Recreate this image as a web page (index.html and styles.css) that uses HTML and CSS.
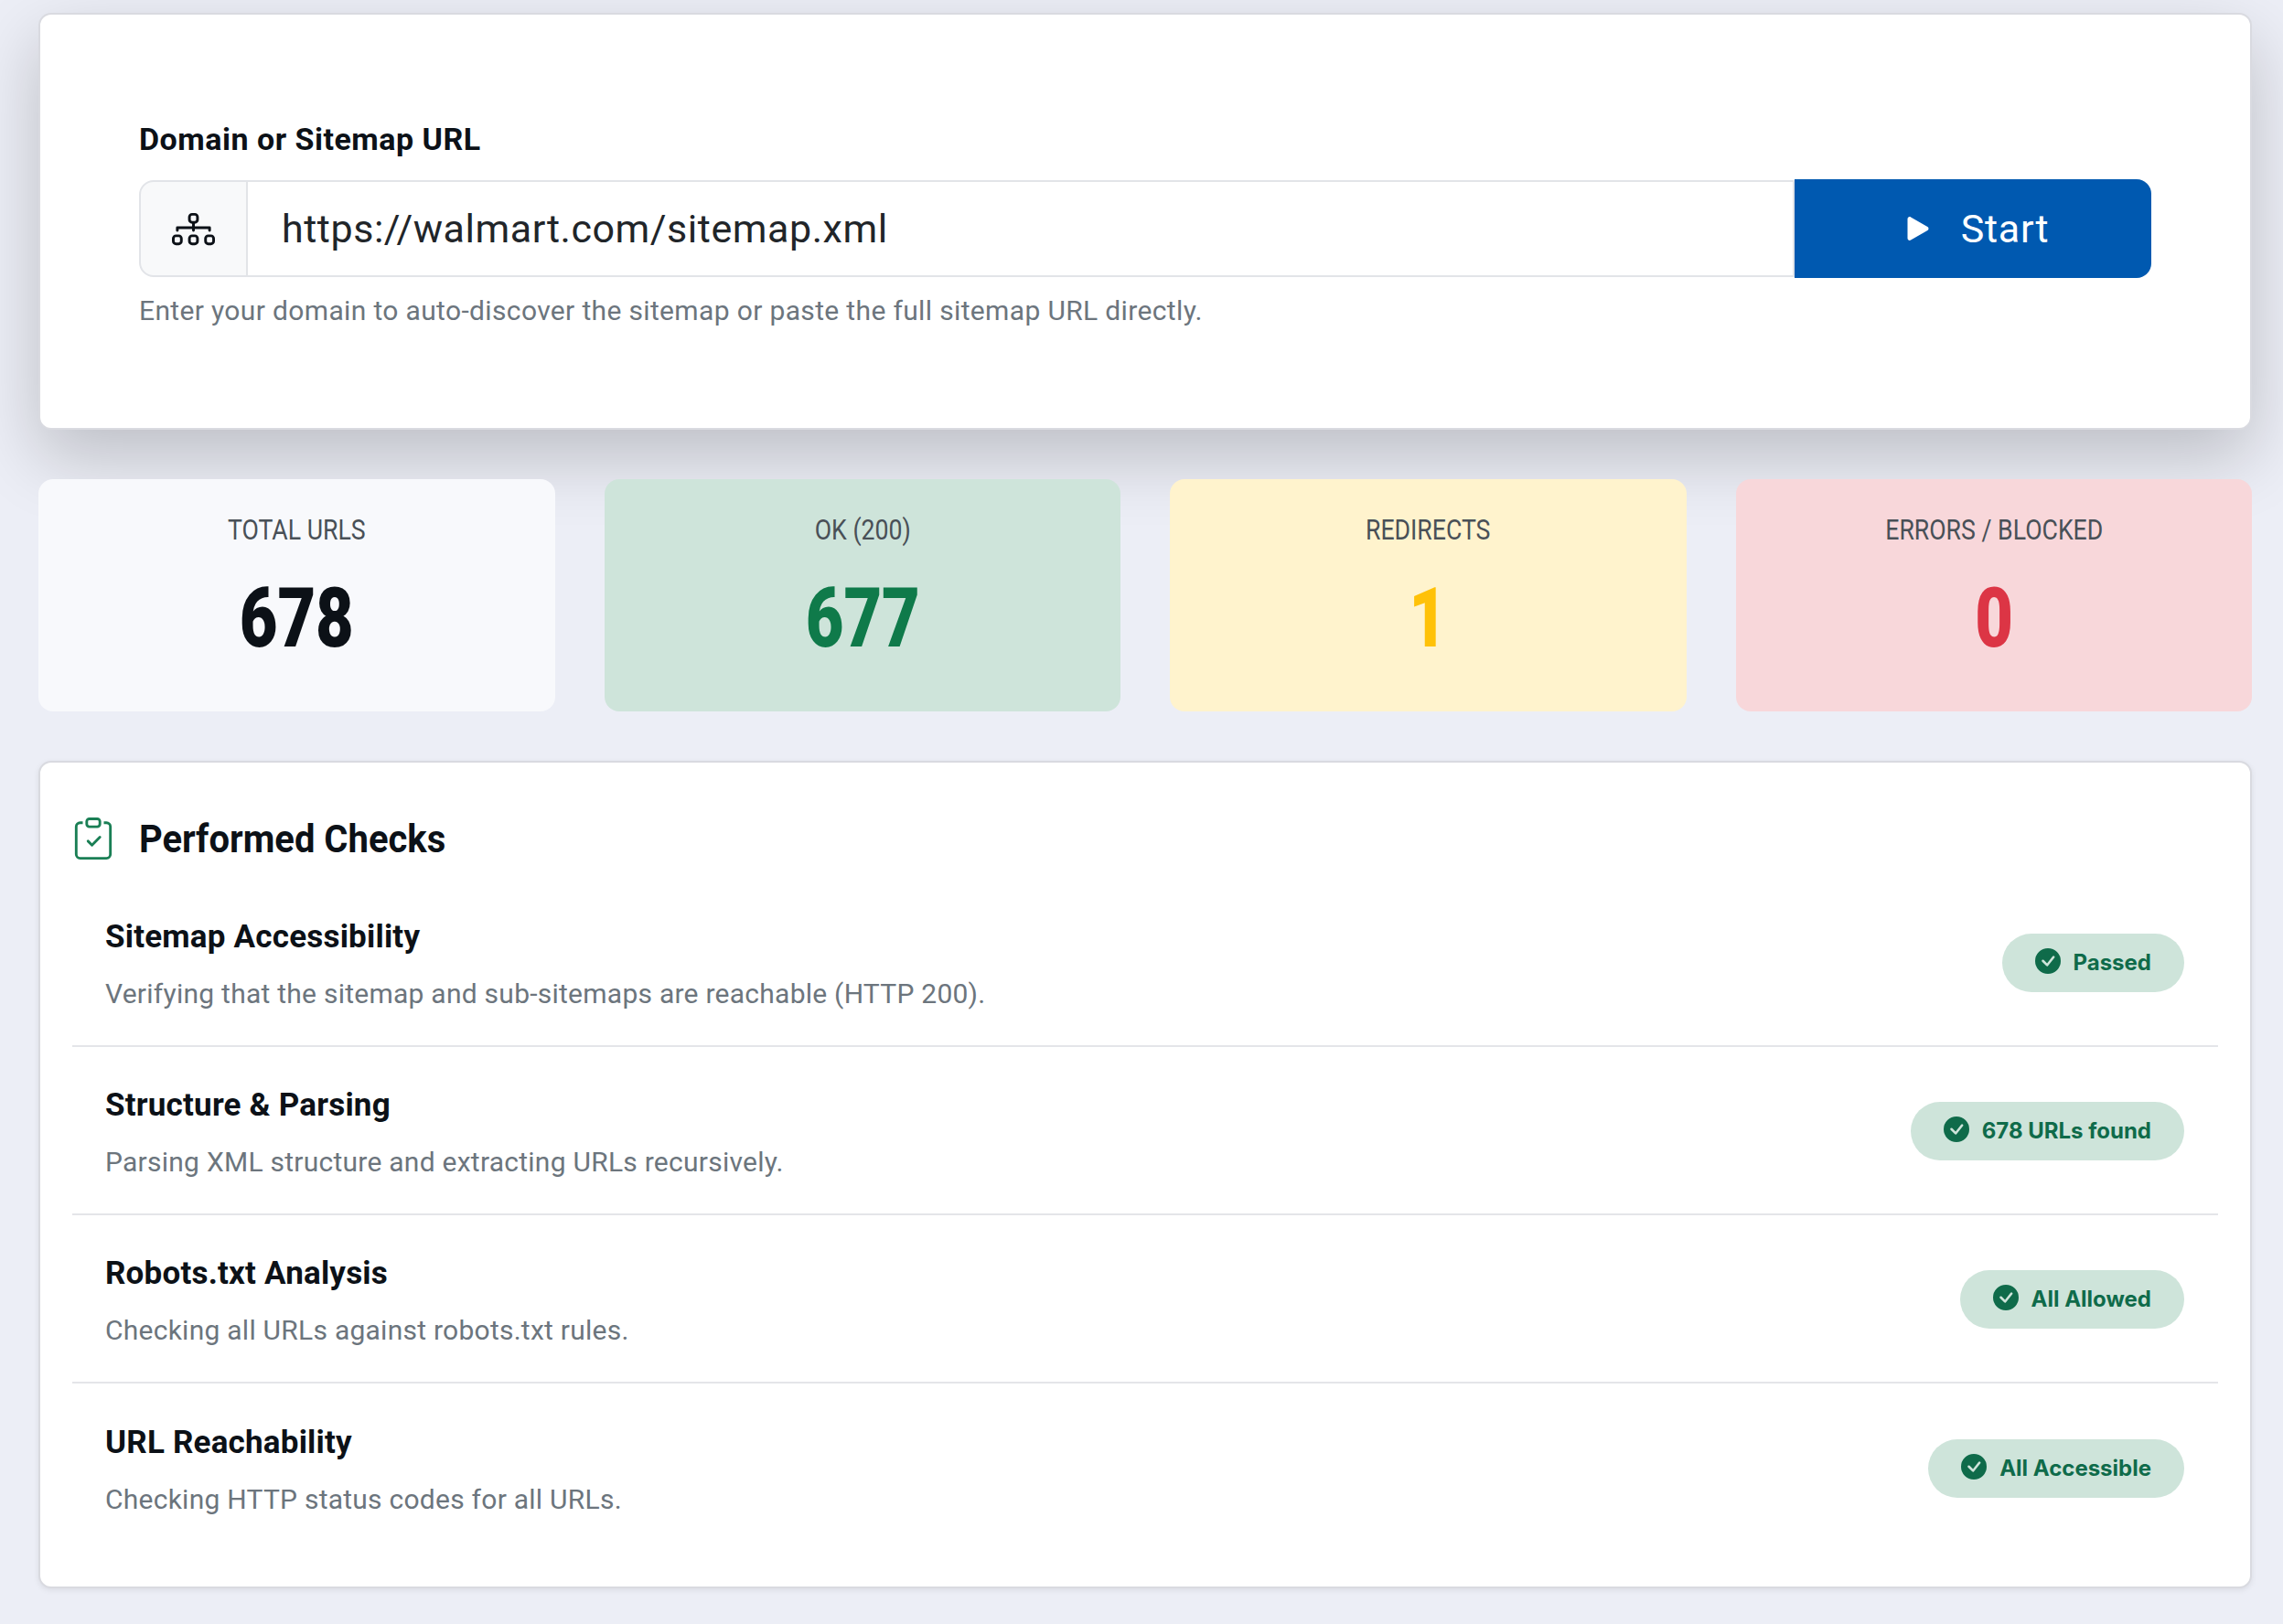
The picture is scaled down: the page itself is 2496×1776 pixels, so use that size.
FILE: index.html
```html
<!DOCTYPE html>
<html lang="en">
<head>
  <meta charset="UTF-8">
  <meta name="viewport" content="width=device-width, initial-scale=1">
  <title>Sitemap Checker</title>
  <link rel="stylesheet" href="styles.css">
</head>
<body>
  <div class="page">
    <section class="card hero">
      <label class="field-label" for="url">Domain or Sitemap URL</label>
      <div class="input-group">
        <span class="addon">
          <svg class="addon-icon" viewBox="0 0 16 16" fill="currentColor"><path fill-rule="evenodd" d="M6 3.5A1.5 1.5 0 0 1 7.5 2h1A1.5 1.5 0 0 1 10 3.5v1A1.5 1.5 0 0 1 8.5 6v1H14a.5.5 0 0 1 .5.5v1a.5.5 0 0 1-1 0V8h-5v.5a.5.5 0 0 1-1 0V8h-5v.5a.5.5 0 0 1-1 0v-1A.5.5 0 0 1 2 7h5.5V6A1.5 1.5 0 0 1 6 4.5zM8.5 5a.5.5 0 0 0 .5-.5v-1a.5.5 0 0 0-.5-.5h-1a.5.5 0 0 0-.5.5v1a.5.5 0 0 0 .5.5zM0 11.5A1.5 1.5 0 0 1 1.5 10h1A1.5 1.5 0 0 1 4 11.5v1A1.5 1.5 0 0 1 2.5 14h-1A1.5 1.5 0 0 1 0 12.5zm1.5-.5a.5.5 0 0 0-.5.5v1a.5.5 0 0 0 .5.5h1a.5.5 0 0 0 .5-.5v-1a.5.5 0 0 0-.5-.5zm4.5.5A1.5 1.5 0 0 1 7.5 10h1a1.5 1.5 0 0 1 1.5 1.5v1A1.5 1.5 0 0 1 8.5 14h-1A1.5 1.5 0 0 1 6 12.5zm1.5-.5a.5.5 0 0 0-.5.5v1a.5.5 0 0 0 .5.5h1a.5.5 0 0 0 .5-.5v-1a.5.5 0 0 0-.5-.5zm4.5.5a1.5 1.5 0 0 1 1.5-1.5h1a1.5 1.5 0 0 1 1.5 1.5v1a1.5 1.5 0 0 1-1.5 1.5h-1a1.5 1.5 0 0 1-1.5-1.5zm1.5-.5a.5.5 0 0 0-.5.5v1a.5.5 0 0 0 .5.5h1a.5.5 0 0 0 .5-.5v-1a.5.5 0 0 0-.5-.5z"/></svg>
        </span>
        <input class="url-input" type="text" id="url" value="https://walmart.com/sitemap.xml">
        <button class="start" type="button">
          <svg class="play-icon" viewBox="0 0 16 16" fill="currentColor"><path d="m11.596 8.697-6.363 3.692c-.54.313-1.233-.066-1.233-.697V4.308c0-.63.692-1.01 1.233-.696l6.363 3.692a.802.802 0 0 1 0 1.393"/></svg>
          <span>Start</span>
        </button>
      </div>
      <p class="help">Enter your domain to auto-discover the sitemap or paste the full sitemap URL directly.</p>
    </section>

    <section class="stats">
      <div class="stat stat-total">
        <div class="stat-label">TOTAL URLS</div>
        <div class="stat-value">678</div>
      </div>
      <div class="stat stat-ok">
        <div class="stat-label">OK (200)</div>
        <div class="stat-value">677</div>
      </div>
      <div class="stat stat-redirect">
        <div class="stat-label">REDIRECTS</div>
        <div class="stat-value">1</div>
      </div>
      <div class="stat stat-error">
        <div class="stat-label">ERRORS / BLOCKED</div>
        <div class="stat-value">0</div>
      </div>
    </section>

    <section class="card checks">
      <h2 class="checks-title">
        <svg class="clip-icon" viewBox="0 0 16 16" fill="currentColor"><path fill-rule="evenodd" d="M10.854 7.146a.5.5 0 0 1 0 .708l-3 3a.5.5 0 0 1-.708 0l-1.5-1.5a.5.5 0 1 1 .708-.708L7.5 9.793l2.646-2.647a.5.5 0 0 1 .708 0"/><path d="M4 1.5H3a2 2 0 0 0-2 2V14a2 2 0 0 0 2 2h10a2 2 0 0 0 2-2V3.5a2 2 0 0 0-2-2h-1v1h1a1 1 0 0 1 1 1V14a1 1 0 0 1-1 1H3a1 1 0 0 1-1-1V3.5a1 1 0 0 1 1-1h1z"/><path d="M9.5 1a.5.5 0 0 1 .5.5v1a.5.5 0 0 1-.5.5h-3a.5.5 0 0 1-.5-.5v-1a.5.5 0 0 1 .5-.5zm-3-1A1.5 1.5 0 0 0 5 1.5v1A1.5 1.5 0 0 0 6.5 4h3A1.5 1.5 0 0 0 11 2.5v-1A1.5 1.5 0 0 0 9.5 0z"/></svg>
        <span class="checks-text">Performed Checks</span>
      </h2>

      <div class="check-row">
        <div>
          <div class="check-name">Sitemap Accessibility</div>
          <div class="check-desc">Verifying that the sitemap and sub-sitemaps are reachable (HTTP 200).</div>
        </div>
        <span class="badge"><svg class="badge-icon" viewBox="0 0 16 16" fill="currentColor"><path d="M16 8A8 8 0 1 1 0 8a8 8 0 0 1 16 0m-3.97-3.03a.75.75 0 0 0-1.08.022L7.477 9.417 5.384 7.323a.75.75 0 0 0-1.06 1.06L6.97 11.03a.75.75 0 0 0 1.079-.02l3.992-4.99a.75.75 0 0 0-.01-1.05z"/></svg>Passed</span>
      </div>

      <div class="check-row">
        <div>
          <div class="check-name">Structure &amp; Parsing</div>
          <div class="check-desc">Parsing XML structure and extracting URLs recursively.</div>
        </div>
        <span class="badge"><svg class="badge-icon" viewBox="0 0 16 16" fill="currentColor"><path d="M16 8A8 8 0 1 1 0 8a8 8 0 0 1 16 0m-3.97-3.03a.75.75 0 0 0-1.08.022L7.477 9.417 5.384 7.323a.75.75 0 0 0-1.06 1.06L6.97 11.03a.75.75 0 0 0 1.079-.02l3.992-4.99a.75.75 0 0 0-.01-1.05z"/></svg>678 URLs found</span>
      </div>

      <div class="check-row">
        <div>
          <div class="check-name">Robots.txt Analysis</div>
          <div class="check-desc">Checking all URLs against robots.txt rules.</div>
        </div>
        <span class="badge"><svg class="badge-icon" viewBox="0 0 16 16" fill="currentColor"><path d="M16 8A8 8 0 1 1 0 8a8 8 0 0 1 16 0m-3.97-3.03a.75.75 0 0 0-1.08.022L7.477 9.417 5.384 7.323a.75.75 0 0 0-1.06 1.06L6.97 11.03a.75.75 0 0 0 1.079-.02l3.992-4.99a.75.75 0 0 0-.01-1.05z"/></svg>All Allowed</span>
      </div>

      <div class="check-row">
        <div>
          <div class="check-name">URL Reachability</div>
          <div class="check-desc">Checking HTTP status codes for all URLs.</div>
        </div>
        <span class="badge"><svg class="badge-icon" viewBox="0 0 16 16" fill="currentColor"><path d="M16 8A8 8 0 1 1 0 8a8 8 0 0 1 16 0m-3.97-3.03a.75.75 0 0 0-1.08.022L7.477 9.417 5.384 7.323a.75.75 0 0 0-1.06 1.06L6.97 11.03a.75.75 0 0 0 1.079-.02l3.992-4.99a.75.75 0 0 0-.01-1.05z"/></svg>All Accessible</span>
      </div>
    </section>
  </div>
</body>
</html>
```

FILE: styles.css
```css
* {
  box-sizing: border-box;
}
body {
  margin: 0;
  background-color: #eceef6;
  font-family: Roboto, "Liberation Sans", sans-serif;
  color: #0c1117;
}
.page {
  display: flex;
  flex-direction: column;
  padding: 14px 34px 40px 42px;
}
.card {
  background: white;
  border: 2px solid #d9dae0;
  border-radius: 14px;
}
.hero {
  height: 456px;
  padding: 114px 108px 0;
  box-shadow: 0 30px 77px rgba(0, 0, 0, 0.2);
}
.field-label {
  display: block;
  margin-bottom: 22px;
  font-size: 34px;
  line-height: 44px;
  font-weight: 700;
  letter-spacing: 0.5px;
}
.input-group {
  display: flex;
  height: 108px;
}
.addon {
  display: flex;
  align-items: center;
  justify-content: center;
  width: 119px;
  margin: 1px 0;
  background: #f8f9fa;
  border: 2px solid #e2e4e8;
  border-radius: 16px 0 0 16px;
}
.addon-icon {
  width: 47px;
  height: 47px;
}
.url-input {
  flex: 1;
  min-width: 0;
  margin: 1px 0;
  padding: 0 37px;
  border: 2px solid #e2e4e8;
  border-left: 0;
  outline: none;
  font-family: Roboto, sans-serif;
  font-size: 43px;
  color: #212529;
  letter-spacing: 0.55px;
}
.start {
  display: flex;
  align-items: center;
  justify-content: center;
  gap: 24px;
  width: 390px;
  border: none;
  border-radius: 0 16px 16px 0;
  background-color: #0059b0;
  color: white;
  font-family: Roboto, sans-serif;
  font-size: 43px;
  letter-spacing: 0.8px;
}
.play-icon {
  width: 46px;
  height: 46px;
}
.help {
  margin: 15px 0 0;
  font-size: 30px;
  line-height: 42px;
  letter-spacing: 0.35px;
  color: #6c757d;
}
.stats {
  display: grid;
  grid-template-columns: repeat(4, 1fr);
  gap: 54px;
  margin-top: 54px;
}
.stat {
  height: 254px;
  padding-top: 33px;
  border-radius: 16px;
  text-align: center;
}
.stat-label {
  font-size: 31px;
  line-height: 46px;
  color: #495057;
  transform: scaleX(0.86);
}
.stat-value {
  margin-top: 26px;
  font-size: 90px;
  line-height: 96px;
  font-weight: 900;
  transform: scaleX(0.8);
}
.stat-total { background: #f8f9fc; }
.stat-ok { background: #cee4da; }
.stat-redirect { background: #fff3cd; }
.stat-error { background: #f8d7da; }
.stat-ok .stat-value { color: #0f7a4a; }
.stat-redirect .stat-value { color: #ffc107; }
.stat-error .stat-value { color: #dc3545; }
.checks {
  margin-top: 54px;
  height: 905px;
  padding: 57px 35px 0;
  box-shadow: 0 2px 6px rgba(0, 0, 0, 0.08);
}
.checks-title {
  display: flex;
  align-items: center;
  gap: 27px;
  margin: 0 0 18px;
  font-size: 43px;
  line-height: 52px;
  font-weight: 700;
}
.checks-text {
  transform: scaleX(0.93);
  transform-origin: left center;
}
.clip-icon {
  width: 46px;
  height: 46px;
  color: #1a7f55;
}
.check-row {
  display: flex;
  align-items: center;
  justify-content: space-between;
  height: 184px;
  padding: 8px 37px 0 36px;
  border-bottom: 2px solid #e4e5e9;
}
.check-row:last-child {
  border-bottom: none;
}
.check-name {
  font-size: 35px;
  line-height: 42px;
  font-weight: 700;
  letter-spacing: 0.2px;
}
.check-desc {
  margin-top: 20px;
  font-size: 30px;
  line-height: 42px;
  letter-spacing: 0.25px;
  color: #6c757d;
}
.badge {
  display: inline-flex;
  align-items: center;
  gap: 14px;
  height: 64px;
  padding: 0 36px;
  border-radius: 32px;
  background: #cee4da;
  color: #0f6b4a;
  font-family: Inter, sans-serif;
  font-size: 24px;
  font-weight: 700;
  margin-top: -7px;
}
.badge-icon {
  width: 28px;
  height: 28px;
  margin-top: -4px;
}
```
